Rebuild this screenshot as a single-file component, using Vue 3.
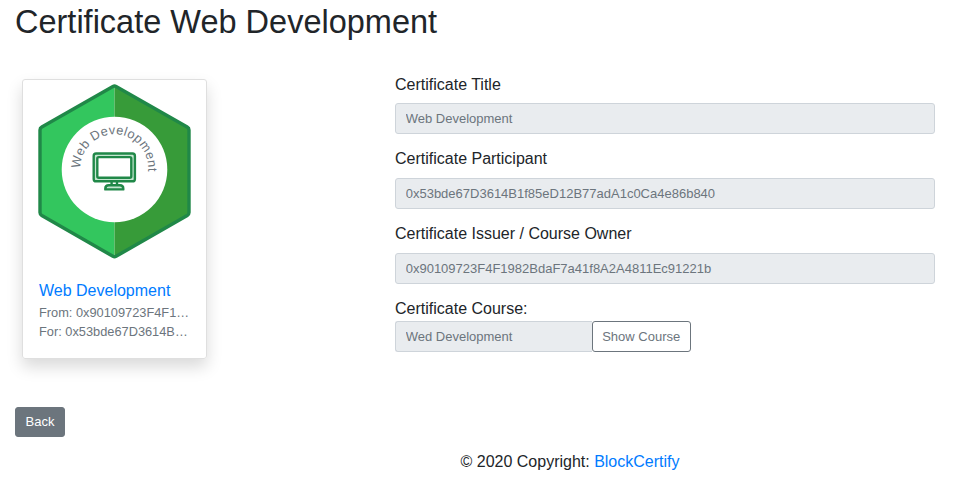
<script setup>
const fields = [
  { id: 'title', label: 'Certificate Title', value: 'Web Development' },
  { id: 'participant', label: 'Certificate Participant', value: '0x53bde67D3614B1f85eD12B77adA1c0Ca4e86b840' },
  { id: 'issuer', label: 'Certificate Issuer / Course Owner', value: '0x90109723F4F1982BdaF7a41f8A2A4811Ec91221b' },
]
</script>

<template>
  <div class="page">
    <h2 class="heading">Certificate Web Development</h2>
    <main class="row">
      <article class="card">
        <svg class="badge" width="153" height="176" viewBox="0 0 153 176">
          <path class="hex-light" d="M76.5 2.2 L2 44.2 V129.7 L76.5 173 Z" />
          <path class="hex-dark" d="M76.5 2.2 L151 44.2 V129.7 L76.5 173 Z" />
          <path class="hex-edge" d="M74.9 2.5 Q76.5 1.6 78.1 2.5 L149.2 43 Q151 44 151 46 V128.4 Q151 130.4 149.2 131.5 L78.1 172.3 Q76.5 173.2 74.9 172.3 L3.8 131.5 Q2 130.4 2 128.4 V46 Q2 44 3.8 43 Z" />
          <circle cx="76.5" cy="85.5" r="52.8" fill="#fff" />
          <path id="title-arc" d="M42.4 84.5 A33.9 34.3 0 0 1 110.2 84.5 V100" fill="none" />
          <text class="arc-text"><textPath href="#title-arc">Web Development</textPath></text>
          <g class="monitor">
            <rect class="bezel" x="55.7" y="69.5" width="41.2" height="27.8" rx="2.4" />
            <rect class="screen" x="59.3" y="73.1" width="34" height="20.6" rx="1.5" />
            <path class="bezel" d="M73.6 97.3 V101.3 M79 97.3 V101.3 M67.3 105.4 V104.7 Q67.3 101.3 70.7 101.3 H81.9 Q85.3 101.3 85.3 104.7 V105.4 Z" />
          </g>
        </svg>
        <div class="card-body">
          <a class="card-title">Web Development</a>
          <p class="meta">From: 0x90109723F4F1…</p>
          <p class="meta">For: 0x53bde67D3614B…</p>
        </div>
      </article>
      <form class="form" @submit.prevent>
        <div v-for="f in fields" :key="f.id" class="group">
          <label :for="f.id">{{ f.label }}</label>
          <input :id="f.id" class="control" :value="f.value" disabled />
        </div>
        <label for="course">Certificate Course:</label>
        <div class="input-group">
          <input id="course" class="control" value="Wed Development" disabled />
          <button type="button" class="btn btn-outline">Show Course</button>
        </div>
      </form>
    </main>
    <button type="button" class="btn btn-back">Back</button>
    <footer class="footer">© 2020 Copyright: <a>BlockCertify</a></footer>
  </div>
</template>

<style>
body {
  background: #fff;
}
</style>

<style scoped>
.page {
  box-sizing: border-box;
  height: 490px;
  padding: 0 15px;
  overflow: hidden;
  color: #212529;
  font: 16px/24px "Liberation Sans", Arial, sans-serif;
}
.page * {
  box-sizing: border-box;
}
.heading {
  margin: 0;
  height: 79px;
  font-size: 32.5px;
  line-height: 45px;
  font-weight: 400;
}
.row {
  display: flex;
  height: 328px;
  align-items: flex-start;
}
.card {
  width: 185px;
  height: 280px;
  margin-left: 7px;
  padding: 4px 15px 0;
  border: 1px solid #dfdfdf;
  border-radius: 3px;
  box-shadow: 0 8px 16px rgba(0, 0, 0, 0.15);
}
.badge {
  display: block;
}
.hex-light { fill: #33c65e; }
.hex-dark { fill: #379b39; }
.hex-edge {
  fill: none;
  stroke: #208848;
  stroke-width: 3.4;
}
.arc-text {
  fill: #6c757d;
  font-size: 12.8px;
  letter-spacing: 0.35px;
}
.monitor {
  stroke: #208848;
  stroke-width: 2.4;
  stroke-linejoin: round;
}
.bezel { fill: #c4e6d0; }
.screen { fill: #fff; }
.card-body {
  padding: 19px 0 0 1px;
}
.card-title {
  display: block;
  line-height: 24px;
}
a {
  color: #007bff;
  text-decoration: none;
}
.meta {
  margin: 0;
  color: #6c757d;
  font-size: 12.8px;
  line-height: 19px;
  white-space: nowrap;
}
.form {
  width: 540px;
  margin: -6.4px 0 0 188px;
}
.group {
  height: 74.8px;
}
label {
  display: block;
  height: 24px;
}
.group label {
  height: 30.7px;
}
.control {
  display: block;
  width: 100%;
  height: 31px;
  margin: 0;
  padding: 4px 9.7px;
  border: 1px solid #ced4da;
  border-radius: 3px;
  background: #e9ecef;
  color: #6c757d;
  font: 13px/20px "Liberation Sans", Arial, sans-serif;
}
.input-group {
  display: flex;
  width: 296px;
}
.input-group .control {
  flex: 1;
  min-width: 0;
  border-right: 0;
  border-radius: 3px 0 0 3px;
}
.btn {
  display: block;
  margin: 0;
  padding: 0;
  border: 1px solid #6c757d;
  border-radius: 3px;
  font: 13px/20px "Liberation Sans", Arial, sans-serif;
}
.btn-outline {
  width: 99px;
  height: 31px;
  padding-right: 0.6px;
  background: #fff;
  color: #6c757d;
}
.btn-back {
  width: 50px;
  height: 30px;
  background: #6c757d;
  color: #fff;
}
.footer {
  padding: 13px 0 0 166px;
  text-align: center;
}
</style>
